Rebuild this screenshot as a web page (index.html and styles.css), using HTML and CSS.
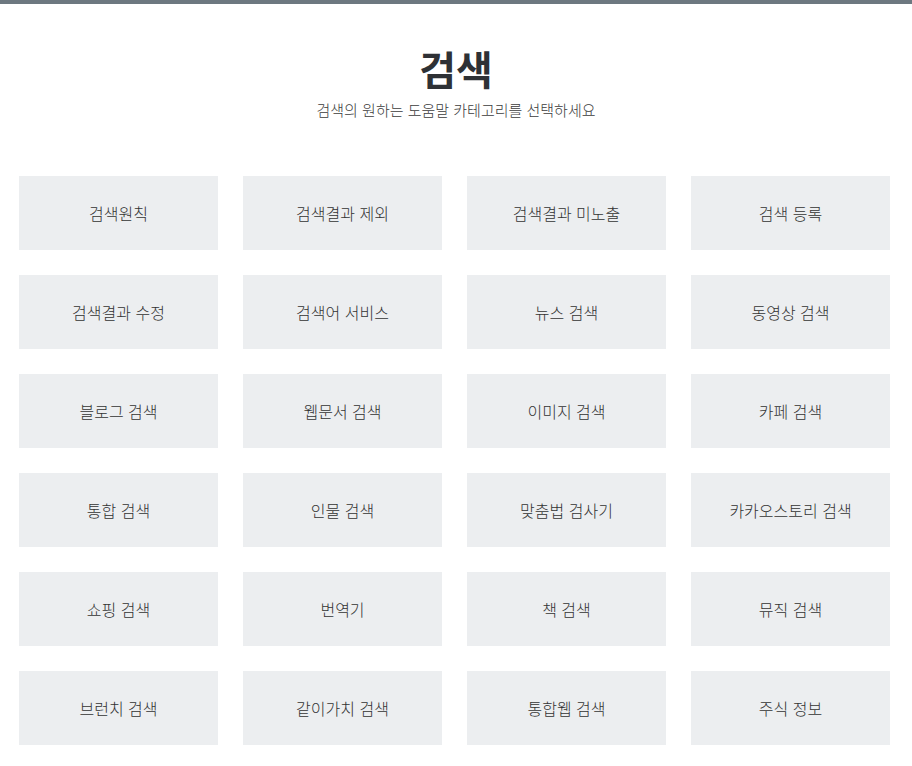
FILE: index.html
```html
<!DOCTYPE html>
<html lang="ko">
<head>
  <meta charset="UTF-8" />
  <meta name="viewport" content="width=device-width, initial-scale=1.0"/>
  <title>검색 도움말</title>
  <link rel="stylesheet" href="styles.css">
</head>
<body>
  <div class="top-bar"></div>
  <header class="head">
    <h1>검색</h1>
    <p class="desc">검색의 원하는 도움말 카테고리를 선택하세요</p>
  </header>

  <ul class="menu">
    <li><a href="#">검색원칙</a></li>
    <li><a href="#">검색결과 제외</a></li>
    <li><a href="#">검색결과 미노출</a></li>
    <li><a href="#">검색 등록</a></li>
    <li><a href="#">검색결과 수정</a></li>
    <li><a href="#">검색어 서비스</a></li>
    <li><a href="#">뉴스 검색</a></li>
    <li><a href="#">동영상 검색</a></li>
    <li><a href="#">블로그 검색</a></li>
    <li><a href="#">웹문서 검색</a></li>
    <li><a href="#">이미지 검색</a></li>
    <li><a href="#">카페 검색</a></li>
    <li><a href="#">통합 검색</a></li>
    <li><a href="#">인물 검색</a></li>
    <li><a href="#">맞춤법 검사기</a></li>
    <li><a href="#">카카오스토리 검색</a></li>
    <li><a href="#">쇼핑 검색</a></li>
    <li><a href="#">번역기</a></li>
    <li><a href="#">책 검색</a></li>
    <li><a href="#">뮤직 검색</a></li>
    <li><a href="#">브런치 검색</a></li>
    <li><a href="#">같이가치 검색</a></li>
    <li><a href="#">통합웹 검색</a></li>
    <li><a href="#">주식 정보</a></li>
  </ul>
</body>
</html>
```

FILE: styles.css
```css
body {
  margin: 0;
  background-color: #fff;
  color: #333;
  font-family: "Noto Sans CJK KR", "Noto Sans", sans-serif;
}
.top-bar {
  height: 4px;
  background-color: #6d7880;
}
.head {
  text-align: center;
  padding-top: 38px;
}
.head h1 {
  margin: 0;
  font-size: 40px;
  line-height: 52px;
  font-weight: 700;
  color: #2e3135;
}
.desc {
  margin: 5px 0 0;
  font-size: 15px;
  line-height: 22px;
  font-weight: 300;
  color: #3c3c3c;
}
.menu {
  list-style: none;
  margin: 55px 22px 0 19px;
  padding: 0;
  display: grid;
  grid-template-columns: repeat(4, 199px);
  column-gap: 25px;
  row-gap: 25px;
}
.menu li {
  height: 74px;
  background-color: #eceef0;
}
.menu a {
  display: flex;
  height: 100%;
  align-items: center;
  justify-content: center;
  font-size: 16px;
  font-weight: 300;
  color: #333;
  text-decoration: none;
}
```
